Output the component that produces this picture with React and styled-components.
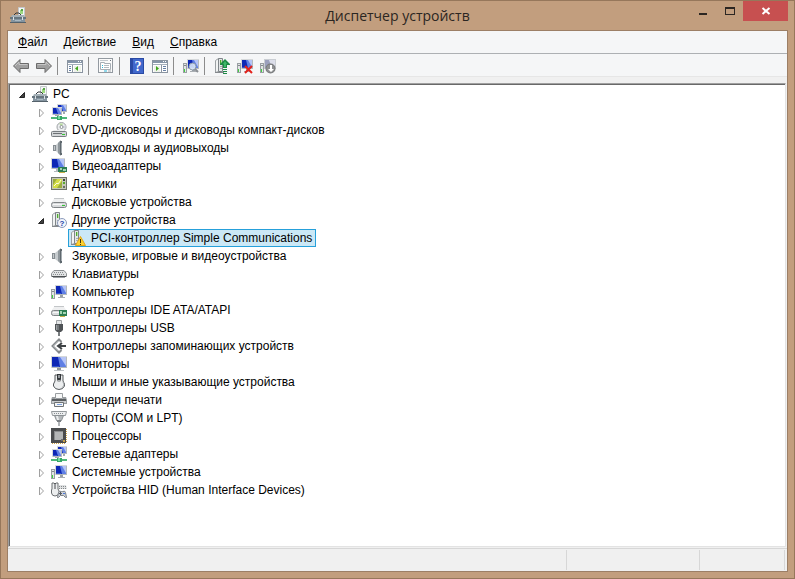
import { useState } from "react";
import styled, { createGlobalStyle } from "styled-components";

const GlobalStyle = createGlobalStyle`
  * {
    box-sizing: border-box;
  }
  body {
    margin: 0;
    font-family: "Liberation Sans", Arial, sans-serif;
    font-size: 12px;
    line-height: 18px;
    color: #000;
  }
  button {
    font: inherit;
    color: inherit;
    border: 0;
    padding: 0;
    background: none;
  }
`;

const Window = styled.div`
  display: flex;
  flex-direction: column;
  min-height: 100vh;
  padding: 0 6px 6px;
  background: #c29e7e;
  border: 1px solid #96775b;
`;

const TitleBar = styled.header`
  display: grid;
  grid-template-columns: 1fr auto 1fr;
  height: 29px;
`;

const TitleIcon = styled.div`
  padding: 6px 3px;
  height: 28px;
`;

const Title = styled.h1`
  margin: 0;
  font-family: "Open Sans", "Noto Sans", sans-serif;
  font-size: 14px;
  font-weight: normal;
  line-height: 29px;
  color: #2b2622;
`;

const WindowButtons = styled.div`
  display: flex;
  justify-content: flex-end;
  height: 20px;
`;

const WindowButton = styled.button`
  display: flex;
  align-items: center;
  justify-content: center;
  width: ${(props) => (props.$close ? 45 : 27)}px;
  background: ${(props) => (props.$close ? "#c75050" : "transparent")};
`;

const Client = styled.main`
  flex: 1;
  display: flex;
  flex-direction: column;
  background: #f0f0f0;
  border: 1px solid #9c7f66;
`;

const MenuBar = styled.nav`
  display: flex;
  height: 23px;
  padding-left: 2px;
  background: #f5f6f7;
  border-bottom: 1px solid #adb0b3;
`;

const MenuItem = styled.button`
  padding: 0 8px;
  height: 22px;
  &::first-letter {
    text-decoration: underline;
  }
`;

const ToolBar = styled.div`
  display: flex;
  align-items: center;
  height: 23px;
  padding: 2px 0 0 1px;
  background: #f5f6f7;
  border-bottom: 1px solid #e6e6e6;
`;

const ToolButton = styled.button`
  display: flex;
  align-items: center;
  justify-content: center;
  width: 23px;
  height: 20px;
`;

const ToolSeparator = styled.div`
  width: 8px;
  height: 18px;
  padding-left: 2px;
  &::before {
    content: "";
    display: block;
    width: 1px;
    height: 18px;
    background: #8c8c8c;
  }
`;

const TreeFrame = styled.section`
  flex: 1;
  display: flex;
  margin: 6px 1px 1px 0;
  background: #fff;
  border: 1px solid #e3e3e3;
  border-top-color: #a0a0a0;
  border-left-color: #a0a0a0;
`;

const TreeView = styled.div`
  flex: 1;
  padding-left: 4px;
  border-top: 1px solid #696969;
  border-left: 1px solid #696969;
`;

const Branch = styled.ul`
  list-style: none;
  margin: 0;
  padding-left: ${(props) => (props.$nested ? 19 : 0)}px;
`;

const Row = styled.div`
  display: flex;
  align-items: center;
  height: 18px;
  padding-left: ${(props) => (props.$leaf ? 16 : 0)}px;
`;

const Expander = styled.button`
  display: flex;
  align-items: center;
  justify-content: center;
  width: 16px;
  height: 18px;
`;

const Label = styled.div`
  display: flex;
  align-items: center;
  gap: 5px;
  height: 18px;
  padding: 0 3px 0 1px;
  white-space: nowrap;
  border: 1px solid ${(props) => (props.$selected ? "#26a0da" : "transparent")};
  background: ${(props) => (props.$selected ? "#cbe8f6" : "transparent")};
`;

const StatusBar = styled.footer`
  display: grid;
  grid-template-columns: 1fr 133px 85px;
  height: 23px;
  padding: 1px 2px 1px 0;
  border-top: 1px solid #d7d7d7;
`;

const StatusCell = styled.div`
  border-right: 1px solid #d7d7d7;
`;

const Svg = styled.svg`
  display: block;
  flex: none;
  width: 16px;
  height: 16px;
`;

function Icon({ children }) {
  return (
    <Svg viewBox="0 0 16 16" aria-hidden="true">
      {children}
    </Svg>
  );
}

// shared parts of the device icons

function Screen({ x, y, w, h }) {
  const l = x + 1;
  const t = y + 1;
  const iw = w - 2;
  const ih = h - 2;
  return (
    <>
      <rect x={x} y={y} width={w} height={h} fill="#b4b9bd" />
      <path d={`M${x} ${y}h${w}v1H${l}v${h - 1}H${x}z`} fill="#d5d8da" />
      <rect x={l} y={t} width={iw} height={ih} fill="#0d27b5" />
      <path d={`M${l + iw / 2 - 1} ${t}h${iw / 2 + 1}v${ih}h-${iw / 2 - 1}z`} fill="#5f7fe4" />
      <path d={`M${l + iw / 2 + 1} ${t}h${iw / 2 - 1}v${ih - 1}z`} fill="#b5c4f6" />
      <rect x={l} y={t + ih - 1} width={iw / 2} height="1" fill="#3453cf" />
    </>
  );
}

function Tower() {
  return (
    <>
      <path d="M0 5h4v10H0z" fill="#9a9fa3" />
      <path d="M1 6h2v8H1z" fill="#e2e4e5" />
      <rect x="1" y="7" width="2" height="1" fill="#83888c" />
      <rect x="1" y="11" width="1" height="3" fill="#3ed23e" />
    </>
  );
}

function PcParts() {
  return (
    <>
      <Tower />
      <Screen x={4} y={1} w={12} h={10} />
      <path d="M9 11h3v2H9z" fill="#9aa0a6" />
      <path d="M7 13h7v1H7z" fill="#a9aeb2" />
    </>
  );
}

function CaseParts() {
  return (
    <>
      <path d="M1.500 2.500l3-2v13l-3 1z" fill="#f1f3f3" stroke="#9ca1a4" />
      <path d="M4.500 0.500h4v13h-4z" fill="#e3e6e7" stroke="#7f8589" />
      <path d="M6 2h1v4H6z" fill="#4fa832" />
      <path d="M7 2h1v4H7z" fill="#b5e3a0" />
      <path d="M6 8h2v1H6zM6 10h2v1H6z" fill="#a6abae" />
      <path d="M1 14h9v1H1z" fill="#85898d" />
    </>
  );
}

function DriveParts() {
  return (
    <>
      <path d="M3 5h10l3 4H0z" fill="#eeeff0" />
      <path d="M3 4.500h10" stroke="#c3c6c8" />
      <rect x="0.500" y="8.500" width="15" height="5" rx="2" fill="#d8dadc" stroke="#7f8386" />
      <rect x="2" y="10" width="9" height="1" fill="#f6f7f7" />
      <rect x="11" y="11" width="3" height="1" fill="#35c435" />
    </>
  );
}

const ToolboxIcon = () => (
  <Icon>
    <path d="M8.500 0.500h6v9h-6z" fill="#f4f5f5" stroke="#c3c7ca" />
    <path d="M10 3h3v4h-3z" fill="#9bd980" />
    <path d="M11 2h2v2h-2z" fill="#58a545" />
    <path d="M4 9V8l2-2h3l2 2v1" fill="none" stroke="#31363a" />
    <path d="M2 8h12l1 2H1z" fill="#a4b0b7" />
    <path d="M0 10h16v2H0z" fill="#67757e" />
    <path d="M1 12h14v3H1z" fill="#8494a0" />
    <path d="M0 15h16v1H0z" fill="#55626b" />
    <path d="M3 10h1v3H3zM12 10h1v3h-1z" fill="#dce2e6" />
    <path d="M5 13h6v1H5z" fill="#aab8c1" />
  </Icon>
);

const NetworkIcon = () => (
  <Icon>
    <Screen x={6} y={0} w={10} h={8} />
    <Screen x={1} y={3} w={10} h={8} />
    <path d="M4 11h4v1H4z" fill="#a4a9ad" />
    <path d="M12 8h2v2h-2z" fill="#a4a9ad" />
    <path d="M0 13h16v2H0z" fill="#4fb87a" />
    <path d="M6 12h5v4H6z" fill="#35a765" />
    <path d="M7 12h2v3H7z" fill="#7bdca0" />
  </Icon>
);

const DvdIcon = () => (
  <Icon>
    <circle cx="10.500" cy="5" r="4.500" fill="#eceeef" stroke="#9da1a5" />
    <path d="M10.500 5L8 1.500h4z" fill="#b7dd9e" />
    <path d="M10.500 5l4-2v4z" fill="#d4d7e2" />
    <circle cx="10.500" cy="5" r="1.500" fill="#fff" stroke="#8c9195" />
    <path d="M3 8h10l3 2H0z" fill="#e9ebec" />
    <rect x="0.500" y="9.500" width="15" height="5" rx="1" fill="#d2d5d7" stroke="#777c80" />
    <rect x="2" y="11" width="9" height="1" fill="#6c7175" />
    <rect x="11" y="12" width="3" height="1" fill="#35c435" />
  </Icon>
);

const SpeakerIcon = () => (
  <Icon>
    <path d="M2 5h3v6H2z" fill="#868d92" />
    <path d="M5 5l4-4v14l-4-4z" fill="#c6cbce" />
    <path d="M7 3l3-3v16l-3-3z" fill="#8f979c" />
    <path d="M9 1h2v14H9z" fill="#5f686e" />
    <path d="M10 3h1v10h-1z" fill="#a7aeb3" />
    <path d="M3 6h1v4H3z" fill="#c3c8cb" />
  </Icon>
);

const VideoIcon = () => (
  <Icon>
    <Screen x={0} y={0} w={14} h={11} />
    <path d="M5 11h3v2H5zM3 13h5v1H3z" fill="#b3b8bc" />
    <path d="M7 9h9v5H7z" fill="#2c7d52" />
    <path d="M9 10h2v2H9zM12 11h3v2h-3z" fill="#a5d5b4" />
    <path d="M8 14h6v1H8z" fill="#c8b04a" />
  </Icon>
);

const SensorIcon = () => (
  <Icon>
    <rect x="0.500" y="1.500" width="15" height="12" fill="#c4c8b8" stroke="#6f736a" />
    <path d="M2 3h9v9H2z" fill="#d3dc45" />
    <path d="M2 3h4L2 9zM11 5v7H6z" fill="#9aab3e" />
    <path d="M3 10l3-3 1 1 3-4" fill="none" stroke="#fbfce0" />
    <path d="M12 3h2v2h-2z" fill="#3d423a" />
    <path d="M12 6h2v2h-2z" fill="#59a92e" />
    <path d="M12 10h2v2h-2z" fill="#6a6e66" />
  </Icon>
);

const DiskIcon = () => (
  <Icon>
    <DriveParts />
  </Icon>
);

const UnknownIcon = () => (
  <Icon>
    <CaseParts />
    <circle cx="11" cy="11" r="4.500" fill="#f2f5fb" stroke="#8b9abb" />
    <text
      x="11"
      y="14"
      textAnchor="middle"
      fontFamily="Liberation Sans"
      fontWeight="bold"
      fontSize="8"
      fill="#2340a8"
    >
      ?
    </text>
  </Icon>
);

const WarningIcon = () => (
  <Icon>
    <CaseParts />
    <path d="M10.500 6.500l5 9h-10z" fill="#fdd32f" stroke="#e0a51a" strokeLinejoin="round" />
    <path d="M10 9h1v4h-1zM10 14h1v1h-1z" fill="#3c3210" />
  </Icon>
);

const SoundIcon = () => (
  <Icon>
    <path d="M1 5h3v6H1z" fill="#868d92" />
    <path d="M4 5l5-4v14l-5-4z" fill="#c6cbce" />
    <path d="M7 3l3-3v16l-3-3z" fill="#8f979c" />
    <path d="M9 1h2v14H9z" fill="#5f686e" />
    <path d="M10 3h1v10h-1z" fill="#a7aeb3" />
    <path d="M2 6h1v4H2z" fill="#c3c8cb" />
  </Icon>
);

const KeyboardIcon = () => (
  <Icon>
    <path d="M3 4.500h10l2.500 3v3H0.500v-3z" fill="#e1e3e4" stroke="#8b8f92" strokeLinejoin="round" />
    <path d="M3 6.500h10M2 8.500h12" stroke="#8a8e91" strokeDasharray="1 1" />
    <path d="M1 10.500h14" stroke="#4c5053" />
    <path d="M2 11.500h12" stroke="#9da0a3" />
  </Icon>
);

const PcIcon = () => (
  <Icon>
    <PcParts />
  </Icon>
);

const IdeIcon = () => (
  <Icon>
    <DriveParts />
    <path d="M8 8h8v6H8z" fill="#2c7d52" />
    <path d="M9 9h2v3H9zM12 10h3v2h-3z" fill="#a5d5b4" />
    <path d="M9 14h5v1H9z" fill="#c8b04a" />
  </Icon>
);

const UsbIcon = () => (
  <Icon>
    <path d="M5.500 0.500h5v4h-5z" fill="#e4e6e7" stroke="#a0a4a7" />
    <path d="M4 4h8v6l-2 2H6l-2-2z" fill="#4f5356" />
    <path d="M5 5h3v5H5z" fill="#74797c" />
    <path d="M5 5h1v5H5z" fill="#9ca0a3" />
    <path d="M7 12h2v4H7z" fill="#797d80" />
  </Icon>
);

const StorageIcon = () => (
  <Icon>
    <path
      d="M10.500 4L8 1.500 1.500 8 8 14.500l2.500-2.500"
      fill="none"
      stroke="#84888b"
      strokeWidth="2"
    />
    <path d="M7.500 3L2.500 8l5 5" fill="none" stroke="#c0c3c5" />
    <path d="M11 5L7 8l4 3M8 8h7" fill="none" stroke="#3f4346" strokeWidth="2" />
  </Icon>
);

const MonitorIcon = () => (
  <Icon>
    <Screen x={0} y={0} w={16} h={12} />
    <path d="M6 12h4v2H6z" fill="#8f9599" />
    <path d="M3 14h10v1H3z" fill="#bfc4c8" />
  </Icon>
);

const MouseIcon = () => (
  <Icon>
    <path
      d="M4 1h2l2 1 2-1h2v6l1.500 3v2q-1.500 3.500-5.500 3.500T2.500 12v-2L4 7z"
      fill="#eceeef"
      stroke="#54585b"
    />
    <path d="M6 0h4v5L9 8H7L6 5z" fill="#34383b" />
    <path d="M7 1h2v3H7z" fill="#94989b" />
    <path d="M12 8l1 3-2 3" fill="none" stroke="#a9adb0" />
    <circle cx="8" cy="7" r="1" fill="#d5d8da" />
  </Icon>
);

const PrinterIcon = () => (
  <Icon>
    <path d="M4.500 1.500h7v5h-7z" fill="#f7f8f8" stroke="#9a9ea1" />
    <path d="M1 5h3v2h8V5h3l1 3v4H0V8z" fill="#9a9ea1" />
    <path d="M1 7h14v2H1z" fill="#5a5e61" />
    <path d="M1 9h14v2H1z" fill="#c9ccce" />
    <path d="M3.500 10.500h9v4h-9z" fill="#f4f5f5" stroke="#6f7376" />
    <path d="M6 12.500h5" stroke="#7da2df" />
  </Icon>
);

const PortIcon = () => (
  <Icon>
    <path d="M0.500 1.500h15l-1 4h-13z" fill="#eceeef" stroke="#94999c" />
    <path d="M3 3.500h10" stroke="#8a8f93" strokeDasharray="1 1" />
    <path d="M3.500 5.500h9l-2 5h-5z" fill="#b4b8bb" stroke="#8b9094" />
    <path d="M5 6h2l1 4H6z" fill="#eceeef" />
    <path d="M6 10h4v2H6z" fill="#7b8084" />
    <path d="M7 12h2v4H7z" fill="#b3b6b9" />
  </Icon>
);

const CpuIcon = () => (
  <Icon>
    <path d="M1 15.500h14M15.500 1v14" stroke="#d0a548" strokeDasharray="1 1" />
    <rect x="0" y="0" width="15" height="15" fill="#4a4c4e" />
    <rect x="3" y="3" width="9" height="9" fill="#b3b5b6" />
    <path d="M3 3h9v1H4v8H3z" fill="#8a8c8e" />
    <path d="M10 11h2v2h-2z" fill="#6b6d6f" />
    <path d="M12 12h2v2h-2z" fill="#c79f48" />
  </Icon>
);

const HidIcon = () => (
  <Icon>
    <path d="M1 1h2l1 1 1-1h2v6l1 2v2q-1 3-4 3T0.500 11V8L1 7z" fill="#eceeef" stroke="#6a6e71" />
    <path d="M4 1v6" stroke="#46494c" />
    <path d="M8 3h7l1 4H8z" fill="#dfe1e2" />
    <path d="M8 4.500h7M8 6.500h8" stroke="#84888b" strokeDasharray="1 1" />
    <path
      d="M6.500 15.500l1-5q1-2 3-1h1q3-1 3 1l1 5h-1l-2-2h-3l-2 2z"
      fill="#cdd1d7"
      stroke="#7b8087"
    />
    <path d="M8 11.500h3M9.500 10v3" stroke="#55595f" />
    <path d="M12 11h2v1h-2z" fill="#4d7be0" />
  </Icon>
);

// toolbar icons

const BackIcon = () => (
  <Icon>
    <path
      d="M0.500 8L7 1.500v4h8.500v5H7v4z"
      fill="#a0a0a0"
      stroke="#6b6b6b"
      strokeLinejoin="round"
    />
    <path d="M2 8l4-4v2.500h8.500" fill="none" stroke="#c6c6c6" />
  </Icon>
);

const ForwardIcon = () => (
  <Icon>
    <path
      d="M15.500 8L9 1.500v4H0.500v5H9v4z"
      fill="#a0a0a0"
      stroke="#6b6b6b"
      strokeLinejoin="round"
    />
    <path d="M14 8l-4-4v2.500H1.500" fill="none" stroke="#c6c6c6" />
  </Icon>
);

function PaneParts() {
  return (
    <>
      <rect x="0.500" y="2.500" width="15" height="12" fill="#fff" stroke="#8a94a0" />
      <rect x="1" y="3" width="14" height="2" fill="#8796a8" />
      <path d="M11 3h1v1h-1zM13 3h1v1h-1z" fill="#fff" />
      <path d="M1 6.500h14" stroke="#a4afbb" />
    </>
  );
}

const TreePaneIcon = () => (
  <Icon>
    <PaneParts />
    <path d="M5.500 7v7" stroke="#8a94a0" />
    <path d="M2 8.500h2M2 10.500h2M2 12.500h2" stroke="#6780a5" />
    <path d="M7 8h7v6H7z" fill="#eef2e9" />
    <path d="M11 8v5l-3-2.500z" fill="#3fa51c" />
  </Icon>
);

const ActionPaneIcon = () => (
  <Icon>
    <PaneParts />
    <path d="M9.500 7v7" stroke="#8a94a0" />
    <path d="M11 8.500h3M11 10.500h3M11 12.500h3" stroke="#6780a5" />
    <path d="M2 8h6v6H2z" fill="#eef2e9" />
    <path d="M4 8v5l3-2.500z" fill="#3fa51c" />
  </Icon>
);

const PropertiesIcon = () => (
  <Icon>
    <rect x="0.500" y="0.500" width="14" height="14" fill="#fbfbfb" stroke="#939aa1" />
    <path d="M2 2.500h8" stroke="#c4c9ce" />
    <path d="M12 2.500h1" stroke="#6d757d" />
    <path d="M2.500 4.500h4v1h6v6h-10z" fill="#fff" stroke="#a7aeb5" />
    <path d="M4 7.500h1M4 9.500h1" stroke="#29b5da" />
    <path d="M6 7.500h5M6 9.500h5" stroke="#b4babf" />
    <path d="M6 13h3" stroke="#29b5da" />
    <path d="M10 13h3" stroke="#a2a8ae" />
  </Icon>
);

const HelpIcon = () => (
  <Icon>
    <rect x="1.500" y="0.500" width="13" height="15" fill="#4168cc" stroke="#2a4aa4" />
    <path d="M2 1h2v14H2z" fill="#2a4aa4" />
    <text
      x="9"
      y="13"
      textAnchor="middle"
      fontFamily="Liberation Serif"
      fontWeight="bold"
      fontSize="14"
      fill="#fff"
    >
      ?
    </text>
  </Icon>
);

const ScanIcon = () => (
  <Icon>
    <PcParts />
    <circle cx="9.500" cy="8.500" r="3.500" fill="#d8e7f8" fillOpacity="0.900" stroke="#8a99a8" />
    <path d="M12 11l3 3" stroke="#8b8f94" strokeWidth="2" />
  </Icon>
);

const UpdateIcon = () => (
  <Icon>
    <CaseParts />
    <path d="M11 1l5 5v1h-3v3H9V7H6V6z" fill="#1d8a45" />
    <path d="M11 3l2 3h-1v3h-2V6H9z" fill="#3fb869" />
    <path d="M9 11h4v1H9zM9 13h4v1H9zM9 15h4v1H9z" fill="#1d8a45" />
  </Icon>
);

const UninstallIcon = () => (
  <Icon>
    <PcParts />
    <path d="M8 8l7 7M15 8l-7 7" stroke="#e3211b" strokeWidth="2" />
  </Icon>
);

const DisableIcon = () => (
  <Icon>
    <Tower />
    <path d="M4 1h12v10H4z" fill="#c9cdd2" />
    <path d="M5 2h10v8H5z" fill="#dcdeea" />
    <path d="M5 2h4l3 8H5z" fill="#9ba0bd" />
    <circle cx="10.500" cy="10.500" r="5" fill="#77797b" />
    <circle cx="10.500" cy="10.500" r="4" fill="#8f9193" />
    <path d="M10 7h2v4h2l-3 3-3-3h2z" fill="#fff" />
  </Icon>
);

const MENU = ["Файл", "Действие", "Вид", "Справка"];

const TOOLS = [
  ["Назад", BackIcon],
  ["Вперед", ForwardIcon],
  null,
  ["Дерево консоли", TreePaneIcon],
  null,
  ["Свойства", PropertiesIcon],
  null,
  ["Справка", HelpIcon],
  ["Панель действий", ActionPaneIcon],
  null,
  ["Обновить конфигурацию", ScanIcon],
  null,
  ["Обновить драйверы", UpdateIcon],
  ["Удалить", UninstallIcon],
  ["Отключить", DisableIcon],
];

const DEVICES = {
  name: "PC",
  icon: ToolboxIcon,
  open: true,
  children: [
    { name: "Acronis Devices", icon: NetworkIcon },
    { name: "DVD-дисководы и дисководы компакт-дисков", icon: DvdIcon },
    { name: "Аудиовходы и аудиовыходы", icon: SpeakerIcon },
    { name: "Видеоадаптеры", icon: VideoIcon },
    { name: "Датчики", icon: SensorIcon },
    { name: "Дисковые устройства", icon: DiskIcon },
    {
      name: "Другие устройства",
      icon: UnknownIcon,
      open: true,
      children: [
        {
          name: "PCI-контроллер Simple Communications",
          icon: WarningIcon,
          leaf: true,
          selected: true,
        },
      ],
    },
    { name: "Звуковые, игровые и видеоустройства", icon: SoundIcon },
    { name: "Клавиатуры", icon: KeyboardIcon },
    { name: "Компьютер", icon: PcIcon },
    { name: "Контроллеры IDE ATA/ATAPI", icon: IdeIcon },
    { name: "Контроллеры USB", icon: UsbIcon },
    { name: "Контроллеры запоминающих устройств", icon: StorageIcon },
    { name: "Мониторы", icon: MonitorIcon },
    { name: "Мыши и иные указывающие устройства", icon: MouseIcon },
    { name: "Очереди печати", icon: PrinterIcon },
    { name: "Порты (COM и LPT)", icon: PortIcon },
    { name: "Процессоры", icon: CpuIcon },
    { name: "Сетевые адаптеры", icon: NetworkIcon },
    { name: "Системные устройства", icon: PcIcon },
    { name: "Устройства HID (Human Interface Devices)", icon: HidIcon },
  ],
};

function TreeNode({ node }) {
  const [open, setOpen] = useState(Boolean(node.open));
  const NodeIcon = node.icon;
  return (
    <li
      role="treeitem"
      aria-expanded={node.leaf ? undefined : open}
      aria-selected={Boolean(node.selected)}
    >
      <Row $leaf={node.leaf}>
        {!node.leaf && (
          <Expander aria-label={node.name} onClick={() => setOpen(!open)}>
            <Icon>
              {open ? (
                <path d="M10.500 6.500v5h-5z" fill="#404040" stroke="#262626" />
              ) : (
                <path d="M6.500 5l4 4-4 4z" fill="#fff" stroke="#a0a0a0" />
              )}
            </Icon>
          </Expander>
        )}
        <Label $selected={node.selected}>
          <NodeIcon />
          {node.name}
        </Label>
      </Row>
      {open && node.children && (
        <Branch $nested role="group">
          {node.children.map((child) => (
            <TreeNode key={child.name} node={child} />
          ))}
        </Branch>
      )}
    </li>
  );
}

export default function App() {
  return (
    <>
      <GlobalStyle />
      <Window>
        <TitleBar>
          <TitleIcon>
            <ToolboxIcon />
          </TitleIcon>
          <Title>Диспетчер устройств</Title>
          <WindowButtons>
            <WindowButton aria-label="Свернуть">
              <Icon>
                <path d="M4 10h8v2H4z" fill="#2b2622" />
              </Icon>
            </WindowButton>
            <WindowButton aria-label="Развернуть">
              <Icon>
                <path d="M3 4h10v8H3zM4 6v5h8V6z" fill="#2b2622" fillRule="evenodd" />
              </Icon>
            </WindowButton>
            <WindowButton $close aria-label="Закрыть">
              <Icon>
                <path d="M4.500 5l7 6M11.500 5l-7 6" stroke="#fff" strokeWidth="2" />
              </Icon>
            </WindowButton>
          </WindowButtons>
        </TitleBar>
        <Client>
          <MenuBar>
            {MENU.map((item) => (
              <MenuItem key={item}>{item}</MenuItem>
            ))}
          </MenuBar>
          <ToolBar>
            {TOOLS.map((tool, i) => {
              if (!tool) return <ToolSeparator key={i} />;
              const [label, ToolIcon] = tool;
              return (
                <ToolButton key={i} aria-label={label}>
                  <ToolIcon />
                </ToolButton>
              );
            })}
          </ToolBar>
          <TreeFrame>
            <TreeView>
              <Branch role="tree">
                <TreeNode node={DEVICES} />
              </Branch>
            </TreeView>
          </TreeFrame>
          <StatusBar>
            <StatusCell />
            <StatusCell />
            <StatusCell />
          </StatusBar>
        </Client>
      </Window>
    </>
  );
}
